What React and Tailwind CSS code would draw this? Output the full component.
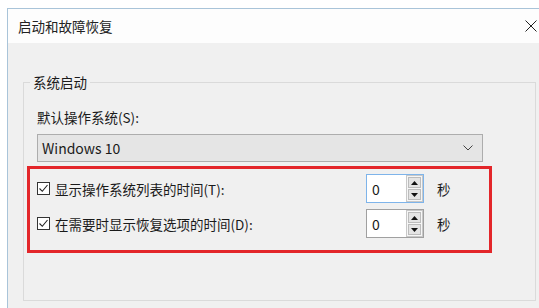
import React from 'react'

function CheckBox() {
  return (
    <span className="flex h-[13px] w-[13px] items-center justify-center border border-[#333333] bg-white">
      <svg width="11" height="11" viewBox="0 0 11 11">
        <path d="M1.5 5.5 L4.3 8.3 L9.5 2" fill="none" stroke="#222222" strokeWidth="1.1" />
      </svg>
    </span>
  )
}

function SpinBox({ focused }) {
  return (
    <div
      className={
        'flex h-[29px] w-[58px] items-stretch bg-white border ' +
        (focused ? 'border-[#7eb4ea]' : 'border-[#a0a0a0]')
      }
    >
      <div className="flex flex-1 items-center pl-[5px] text-[14px] leading-none">0</div>
      <div className="flex w-[17px] flex-col gap-px border border-[#c8c8c8] bg-[#f6f6f6] p-px">
        <div className="flex flex-1 items-center justify-center border border-[#bcbcbc] bg-[#e4e4e4]">
          <svg width="7" height="4" viewBox="0 0 7 4">
            <path d="M0 4 L3.5 0 L7 4 Z" fill="#111111" />
          </svg>
        </div>
        <div className="flex flex-1 items-center justify-center border border-[#bcbcbc] bg-[#e4e4e4]">
          <svg width="7" height="4" viewBox="0 0 7 4">
            <path d="M0 0 L3.5 4 L7 0 Z" fill="#111111" />
          </svg>
        </div>
      </div>
    </div>
  )
}

function TimeRow({ label, focused }) {
  return (
    <div className="flex items-center">
      <div className="flex w-[329px] items-center gap-[5px]">
        <CheckBox />
        <span>{label}</span>
      </div>
      <SpinBox focused={focused} />
      <span className="ml-[13px]">秒</span>
    </div>
  )
}

export default function App() {
  return (
    <div
      className="h-[308px] w-[539px] overflow-hidden bg-white pl-[7px] pt-[8px] text-[13.5px] leading-[20px] text-[#1a1a1a]"
      style={{ fontFamily: '"Noto Sans CJK SC", "Noto Sans", sans-serif' }}
    >
      <div className="flex h-[300px] w-[540px] flex-col border-l border-t border-[#a9c4d9]">
        {/* title bar */}
        <div className="flex h-[34px] items-center justify-between bg-[#fdfdfd] pl-[10px] pr-[10px]">
          <span className="text-[#222222]">启动和故障恢复</span>
          <svg width="12" height="12" viewBox="0 0 12 12">
            <path d="M0.5 0.5 L11.5 11.5 M11.5 0.5 L0.5 11.5" stroke="#222222" strokeWidth="1" />
          </svg>
        </div>

        {/* body */}
        <div className="flex-1 bg-[#f0f0f0] pl-[15px] pt-[29px]">
          <fieldset className="h-[229px] w-[513px] border border-[#dadada] pl-[13px]">
            <legend className="ml-[-7px] px-[3px] leading-[20px]">系统启动</legend>

            <div className="pt-[15px]">默认操作系统(S):</div>

            <div className="mt-[7px] flex h-[28px] w-[446px] items-center justify-between border border-[#adadad] bg-[#e5e5e5] pl-[4px] pr-[9px]">
              <span className="text-[14px]">Windows 10</span>
              <svg width="10" height="6" viewBox="0 0 10 6">
                <path d="M0.5 0.5 L5 5 L9.5 0.5" fill="none" stroke="#444444" strokeWidth="1" />
              </svg>
            </div>

            <div className="ml-[-10px] mt-[4px] flex w-[465px] flex-col gap-[6px] border-[3px] border-[#e3262a] pb-[12px] pl-[7px] pt-[5px]">
              <TimeRow label="显示操作系统列表的时间(T):" focused />
              <TimeRow label="在需要时显示恢复选项的时间(D):" />
            </div>
          </fieldset>
        </div>
      </div>
    </div>
  )
}
